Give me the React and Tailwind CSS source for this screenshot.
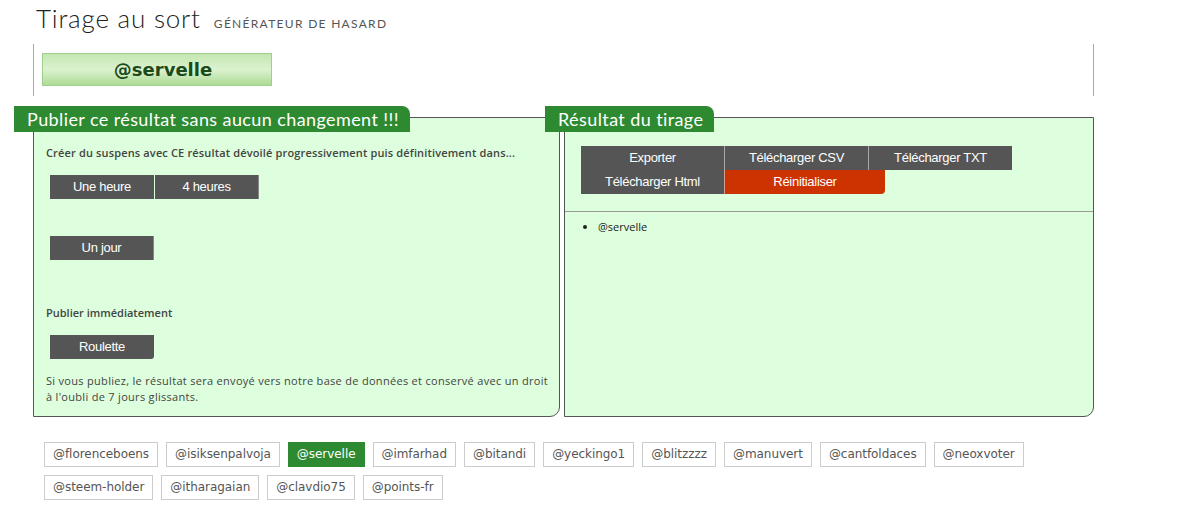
import React from "react";

const tags = [
    "@florenceboens", "@isiksenpalvoja", "@servelle", "@imfarhad", "@bitandi", "@yeckingo1",
    "@blitzzzz", "@manuvert", "@cantfoldaces", "@neoxvoter", "@steem-holder", "@itharagaian",
    "@clavdio75", "@points-fr"
];

// Dark grey button used in both panels
const DarkButton = ({children, className = ""}) => (
    <button className={`h-[24px] bg-[#555] text-white text-[13px] tracking-[-0.3px] font-['Liberation_Sans',Arial,sans-serif] ${className}`}>
        {children}
    </button>
);

const Panel = ({title, className = "", children}) => (
    <div className={`relative h-[300px] border border-[#555] rounded-br-[10px] bg-[#ddffdd] ${className}`}>
        <div className="absolute -top-[12px] -left-[20px] h-[26px] pl-[13px] pr-[11px] bg-[#2e8a30] rounded-tr-[8px] text-white text-[18px] tracking-[0.4px] leading-[26px] whitespace-nowrap font-['Lato',sans-serif]">
            {title}
        </div>
        {children}
    </div>
);

export default function App() {
    return (
        <div className="min-h-screen bg-white font-['Open_Sans',sans-serif] text-[#444]">
            {/* Header */}
            <header className="h-[44px] pl-[36px] pt-[3px] flex items-baseline gap-[13px] font-['Lato',sans-serif]">
                <h1 className="text-[26px] leading-[30px] font-light text-[#222] tracking-[0.8px]">Tirage au sort</h1>
                <span className="text-[12px] uppercase tracking-[1.3px] text-[#555]">Générateur de hasard</span>
            </header>

            <div className="ml-[33px] w-[1061px]">
                {/* Winner */}
                <div className="h-[52px] border-x border-[#aaa] pl-[8px] pt-[9px]">
                    <div className="w-[230px] h-[33px] border border-[#9fcf8c] bg-linear-to-b from-[#c4e7b0] via-[#dcf2cf] to-[#addb94] flex items-center justify-center pl-[12px]">
                        <span className="text-[18px] font-bold text-[#1b4a1b] font-['DejaVu_Sans',Verdana,sans-serif]">@servelle</span>
                    </div>
                </div>

                {/* Panels */}
                <div className="mt-[21px] flex gap-[4px]">
                    <Panel title="Publier ce résultat sans aucun changement !!!" className="w-[527px]">
                        <div className="pl-[12px] pt-[27px]">
                            <p className="text-[11px] leading-[16px] font-semibold tracking-[0.15px]">
                                Créer du suspens avec CE résultat dévoilé progressivement puis définitivement dans...
                            </p>
                            <div className="mt-[14px] ml-[4px] flex gap-[1px]">
                                <DarkButton className="w-[104px]">Une heure</DarkButton>
                                <DarkButton className="w-[104px] border-r border-[#888]">4 heures</DarkButton>
                            </div>
                            <div className="mt-[37px] ml-[4px] flex">
                                <DarkButton className="w-[104px] border-r border-[#888]">Un jour</DarkButton>
                            </div>
                            <p className="mt-[45px] text-[11px] leading-[16px] font-semibold">Publier immédiatement</p>
                            <div className="mt-[14px] ml-[4px] flex">
                                <DarkButton className="w-[104px] rounded-br-[3px]">Roulette</DarkButton>
                            </div>
                            <p className="mt-[14px] text-[11px] leading-[16px] whitespace-nowrap tracking-[0.3px]">
                                Si vous publiez, le résultat sera envoyé vers notre base de données et conservé avec un droit
                                <br/>
                                à l'oubli de 7 jours glissants.
                            </p>
                        </div>
                    </Panel>

                    <Panel title="Résultat du tirage" className="flex-1">
                        <div className="pl-[16px] pt-[28px] pb-[17px]">
                            <div className="flex">
                                <DarkButton className="w-[143px]">Exporter</DarkButton>
                                <DarkButton className="w-[144px] border-l border-[#a8a8a8]">Télécharger CSV</DarkButton>
                                <DarkButton className="w-[144px] border-l border-[#a8a8a8]">Télécharger TXT</DarkButton>
                            </div>
                            <div className="flex">
                                <DarkButton className="w-[143px]">Télécharger Html</DarkButton>
                                <button className="w-[161px] h-[24px] border-l border-[#c9a090] bg-[#cc3300] text-white text-[13px] tracking-[-0.3px] rounded-br-[4px] font-['Liberation_Sans',Arial,sans-serif]">
                                    Réinitialiser
                                </button>
                            </div>
                        </div>
                        <div className="border-t border-[#999]"/>
                        <ul className="list-disc pl-[33px] pt-[7px] text-[11px] leading-[16px] text-[#222]">
                            <li>@servelle</li>
                        </ul>
                    </Panel>
                </div>

                {/* Participants */}
                <div className="mt-[25px] pl-[11px] w-[1000px] flex flex-wrap gap-x-[8px] gap-y-[8px] tracking-[-0.05px] font-['DejaVu_Sans',Verdana,sans-serif]">
                    {tags.map((t) => (
                        <span key={t}
                            className={
                                t === "@servelle"
                                    ? "h-[25px] px-[8px] border border-[#2e8a30] bg-[#2e8a30] text-white text-[12px] leading-[23px]"
                                    : "h-[25px] px-[8px] border border-[#ccc] bg-white text-[#555] text-[12px] leading-[23px]"
                            }>
                            {t}
                        </span>
                    ))}
                </div>
            </div>
        </div>
    );
}
